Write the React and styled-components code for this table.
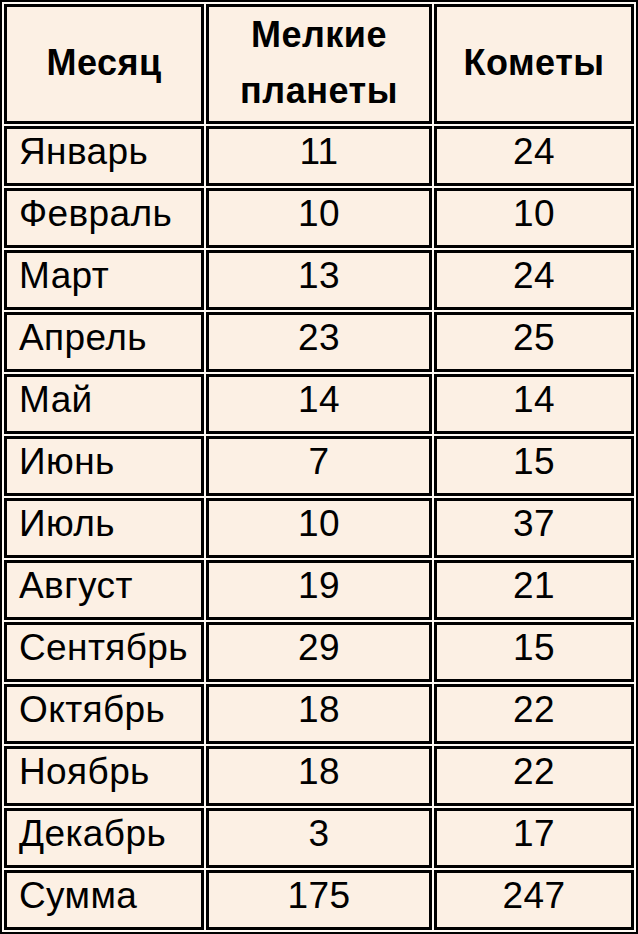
import React from "react";
import styled, { createGlobalStyle } from "styled-components";

const Global = createGlobalStyle`
  html, body { margin: 0; padding: 0; background: #ffffff; }
  body { font-family: "Liberation Sans", Arial, sans-serif; }
`;

const Table = styled.table`
  width: 638px;
  table-layout: fixed;
  border: 2px solid #000;
  border-spacing: 2px;
  background: #fffaf4;
  font-family: "Liberation Sans", Arial, sans-serif;
  color: #000;
  box-sizing: border-box;
`;

const Col = styled.col`
  width: ${(p) => p.$w}px;
`;

const HeadCell = styled.th`
  height: 120px;
  box-sizing: border-box;
  border: 3px solid #000;
  background: #fcf0e4;
  font-size: 36px;
  font-weight: bold;
  line-height: 56px;
  text-align: center;
  vertical-align: middle;
  padding: 0 0 2px;
  letter-spacing: 0.5px;
`;

const Cell = styled.td`
  height: 60px;
  box-sizing: border-box;
  border: 3px solid #000;
  background: #fcf0e4;
  font-size: 37px;
  line-height: 40px;
  vertical-align: middle;
  text-align: ${(p) => (p.$left ? "left" : "center")};
  padding: 0 0 8px ${(p) => (p.$left ? "12px" : "0")};
  white-space: nowrap;
  letter-spacing: 0.4px;
`;

const rows = [
  ["Январь", 11, 24],
  ["Февраль", 10, 10],
  ["Март", 13, 24],
  ["Апрель", 23, 25],
  ["Май", 14, 14],
  ["Июнь", 7, 15],
  ["Июль", 10, 37],
  ["Август", 19, 21],
  ["Сентябрь", 29, 15],
  ["Октябрь", 18, 22],
  ["Ноябрь", 18, 22],
  ["Декабрь", 3, 17],
  ["Сумма", 175, 247],
];

export default function App() {
  return (
    <>
      <Global />
      <Table>
        <colgroup>
          <Col $w={200} />
          <Col $w={226} />
          <Col $w={200} />
        </colgroup>
        <thead>
          <tr>
            <HeadCell>Месяц</HeadCell>
            <HeadCell>
              Мелкие
              <br />
              планеты
            </HeadCell>
            <HeadCell>Кометы</HeadCell>
          </tr>
        </thead>
        <tbody>
          {rows.map(([m, a, b]) => (
            <tr key={m}>
              <Cell $left>{m}</Cell>
              <Cell>{a}</Cell>
              <Cell>{b}</Cell>
            </tr>
          ))}
        </tbody>
      </Table>
    </>
  );
}
